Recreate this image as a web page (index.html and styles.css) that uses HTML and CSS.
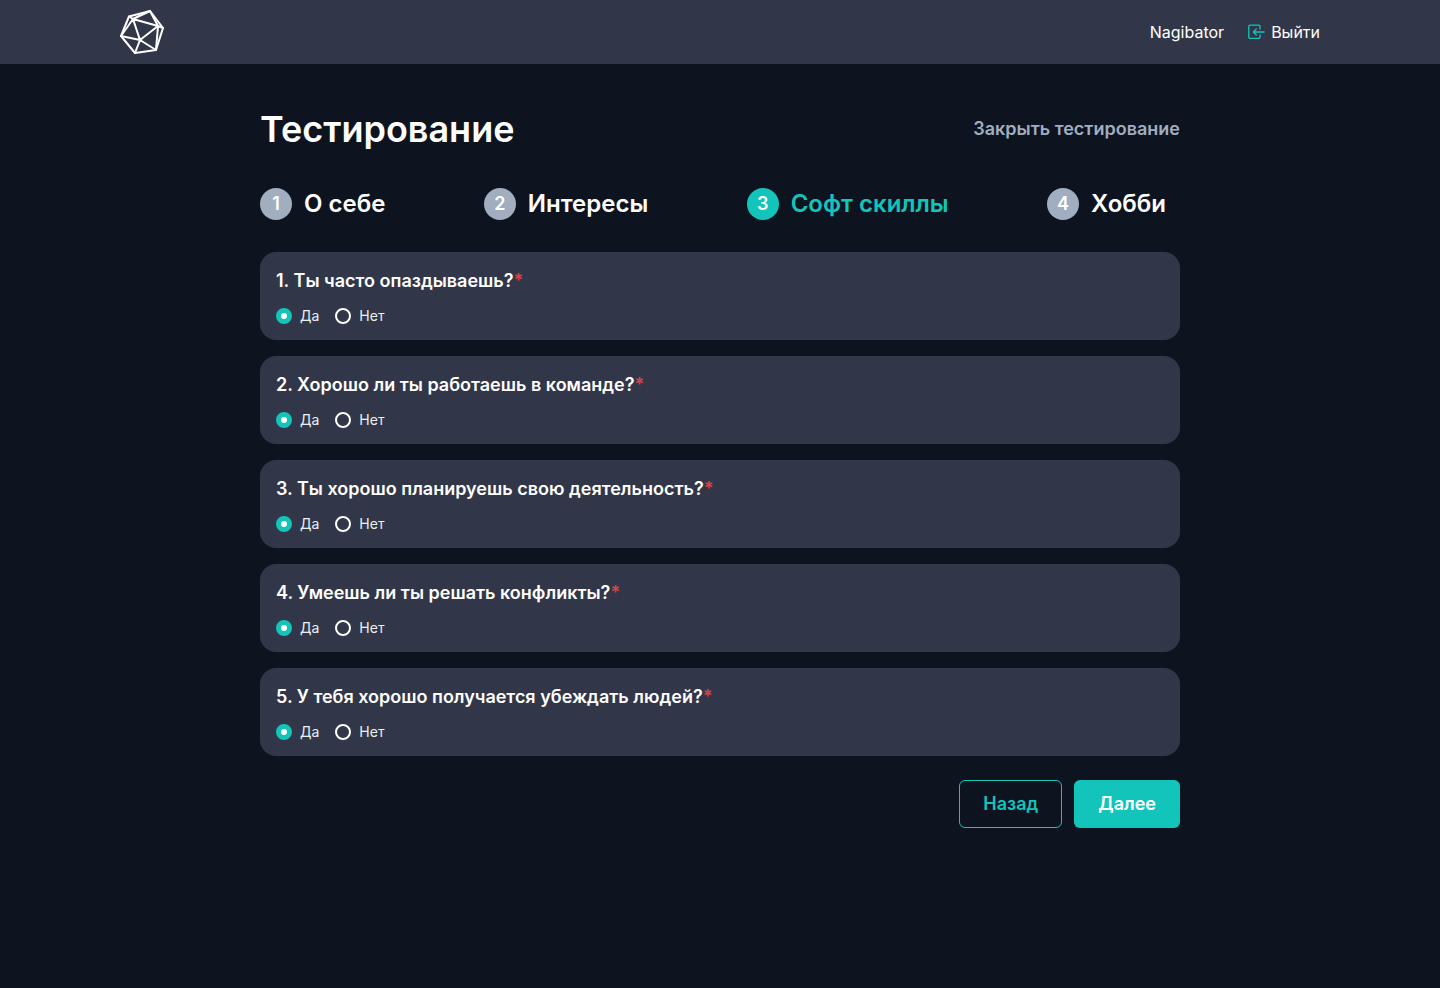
FILE: index.html
```html
<!DOCTYPE html>
<html lang="ru">
<head>
<meta charset="utf-8">
<meta name="viewport" content="width=device-width, initial-scale=1">
<title>Тестирование</title>
<link rel="stylesheet" href="styles.css">
</head>
<body>
<header class="header">
  <div class="header-inner">
    <a class="logo" href="#" aria-label="Главная">
      <svg viewBox="0 0 44 44" width="44" height="44" fill="none" stroke="currentColor" stroke-width="2" stroke-linejoin="round" stroke-linecap="round">
        <path d="M9 6.500 30 1 43 18 36 40 15 43 1 26Z"/>
        <path d="M13 9 38 16 20 30ZM13 9 9 6.500M13 9 30 1 38 16 43 18M38 16 36 40 20 30 1 26 13 9M20 30 15 43"/>
      </svg>
    </a>
    <nav class="user-nav">
      <a href="#">Nagibator</a>
      <a class="logout" href="#">
        <svg viewBox="0 0 17 16" width="17" height="16" fill="none" stroke="currentColor" stroke-width="1.3" stroke-linecap="round" stroke-linejoin="round"><path d="M12 5V2.400A1.200 1.200 0 0 0 10.800 1.200H2A1.200 1.200 0 0 0 .8 2.400v10.700A1.200 1.200 0 0 0 2 14.300h8.800A1.200 1.200 0 0 0 12 13.100V11M16.200 8H5.500M8.300 5l-3 3 3 3"/></svg>
        Выйти
      </a>
    </nav>
  </div>
</header>
<main class="page">
  <div class="heading">
    <h1>Тестирование</h1>
    <button class="close" type="button">Закрыть тестирование</button>
  </div>
  <ol class="steps">
    <li class="step"><span class="step-number">1</span>О себе</li>
    <li class="step"><span class="step-number">2</span>Интересы</li>
    <li class="step step-active" aria-current="step"><span class="step-number">3</span>Софт скиллы</li>
    <li class="step"><span class="step-number">4</span>Хобби</li>
  </ol>
  <form class="form">
    <fieldset class="card">
      <legend>1. Ты часто опаздываешь?<span class="required">*</span></legend>
      <div class="options">
        <label><input type="radio" name="q1" checked>Да</label>
        <label><input type="radio" name="q1">Нет</label>
      </div>
    </fieldset>
    <fieldset class="card">
      <legend>2. Хорошо ли ты работаешь в команде?<span class="required">*</span></legend>
      <div class="options">
        <label><input type="radio" name="q2" checked>Да</label>
        <label><input type="radio" name="q2">Нет</label>
      </div>
    </fieldset>
    <fieldset class="card">
      <legend>3. Ты хорошо планируешь свою деятельность?<span class="required">*</span></legend>
      <div class="options">
        <label><input type="radio" name="q3" checked>Да</label>
        <label><input type="radio" name="q3">Нет</label>
      </div>
    </fieldset>
    <fieldset class="card">
      <legend>4. Умеешь ли ты решать конфликты?<span class="required">*</span></legend>
      <div class="options">
        <label><input type="radio" name="q4" checked>Да</label>
        <label><input type="radio" name="q4">Нет</label>
      </div>
    </fieldset>
    <fieldset class="card">
      <legend>5. У тебя хорошо получается убеждать людей?<span class="required">*</span></legend>
      <div class="options">
        <label><input type="radio" name="q5" checked>Да</label>
        <label><input type="radio" name="q5">Нет</label>
      </div>
    </fieldset>
    <div class="actions">
      <button class="button button-outline" type="button">Назад</button>
      <button class="button" type="submit">Далее</button>
    </div>
  </form>
</main>
</body>
</html>
```

FILE: styles.css
```css
:root {
  --bg: #0e141f;
  --surface: #313749;
  --teal: #13c4bb;
  --muted: #a0aec0;
}
* { box-sizing: border-box; }
body {
  margin: 0;
  background: var(--bg);
  color: #fff;
  font-family: Inter, "Liberation Sans", sans-serif;
  font-size: 16px;
  line-height: 24px;
}
a { color: inherit; text-decoration: none; }
button { font: inherit; cursor: pointer; }
.header { background: var(--surface); padding: 0 24px; }
.header-inner {
  max-width: 1200px;
  min-height: 64px;
  margin: 0 auto;
  display: flex;
  align-items: center;
  justify-content: space-between;
}
.logo svg { display: block; }
.user-nav { display: flex; gap: 24px; }
.logout { display: flex; align-items: center; gap: 6px; }
.logout svg { color: var(--teal); }
.page { max-width: 920px; margin: 0 auto; padding: 43px 0; }
.heading { display: flex; align-items: center; justify-content: space-between; }
h1 { margin: 0; font-size: 36px; line-height: 44px; font-weight: 600; }
.close {
  padding: 0;
  border: 0;
  background: none;
  color: var(--muted);
  font-size: 18px;
  line-height: 26px;
  font-weight: 600;
}
.steps {
  list-style: none;
  margin: 37px 0 32px;
  padding: 0 14px 0 0;
  display: flex;
  justify-content: space-between;
}
.step {
  display: flex;
  align-items: center;
  gap: 12px;
  font-size: 24px;
  line-height: 32px;
  font-weight: 600;
}
.step-number {
  display: grid;
  place-items: center;
  width: 32px;
  height: 32px;
  border-radius: 50%;
  background: var(--muted);
  font-size: 18px;
}
.step-active { color: var(--teal); }
.step-active .step-number { background: var(--teal); color: #fff; }
.form { display: grid; gap: 16px; }
.card {
  min-width: 0;
  margin: 0;
  padding: 16px;
  border: 0;
  border-radius: 16px;
  background: var(--surface);
}
legend {
  float: left;
  width: 100%;
  padding: 0;
  font-size: 18px;
  line-height: 26px;
  font-weight: 600;
}
.required { color: #e53e3e; }
.options { clear: both; display: flex; gap: 16px; padding-top: 14px; }
.options label {
  display: flex;
  align-items: center;
  gap: 8px;
  font-size: 14px;
  line-height: 16px;
  color: #edeff3;
}
.options input {
  appearance: none;
  width: 16px;
  height: 16px;
  margin: 0;
  border: 2px solid #fff;
  border-radius: 50%;
}
.options input:checked {
  border: 5px solid var(--teal);
  background: #fff;
}
.actions { display: flex; justify-content: flex-end; gap: 12px; padding-top: 8px; }
.button {
  min-height: 48px;
  padding: 0 24px;
  border: 0;
  border-radius: 6px;
  background: var(--teal);
  color: #fff;
  font-size: 18px;
  font-weight: 600;
}
.button-outline {
  padding: 0 23px;
  border: 1px solid var(--teal);
  background: none;
  color: var(--teal);
}
```
